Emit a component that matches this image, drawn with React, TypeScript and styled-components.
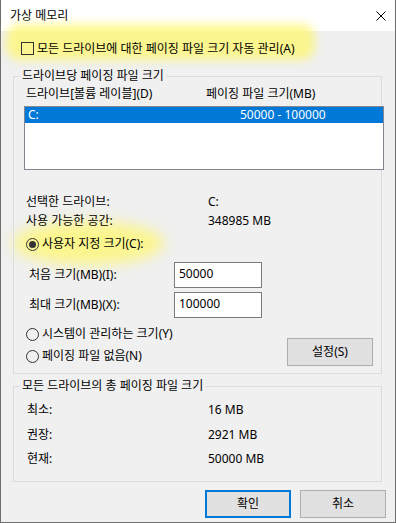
import React from 'react';
import styled, { createGlobalStyle } from 'styled-components';

const GlobalStyle = createGlobalStyle`
  html, body {
    margin: 0;
    padding: 0;
    background: #ffffff;
  }
  body {
    font-family: "Noto Sans", "Noto Sans CJK KR", sans-serif;
    font-size: 12px;
    line-height: 16px;
    color: #000000;
  }
  * {
    box-sizing: border-box;
  }
`;

const Window = styled.div`
  width: 396px;
  height: 523px;
  display: flex;
  flex-direction: column;
  border: 1px solid #6e6e6e;
  border-top: none;
  background: #f0f0f0;
`;

const TitleBar = styled.div`
  height: 31px;
  flex: none;
  display: flex;
  align-items: center;
  justify-content: space-between;
  padding: 0 9px 0 9px;
  background: #ffffff;
  .title {
    font-size: 12px;
  }
`;

// own stacking context so the highlighter marks sit under every text
const Body = styled.div`
  position: relative;
  isolation: isolate;
  flex: 1;
  display: flex;
  flex-direction: column;
  padding: 0 9px 0 12px;
`;

const Highlight = styled.div<{ $shape: 'stroke' | 'blob' }>`
  position: relative;
  align-self: flex-start;
  &::before {
    content: '';
    position: absolute;
    z-index: -1;
    pointer-events: none;
    background: rgba(255, 247, 110, 0.75);
    ${(p) =>
      p.$shape === 'stroke'
        ? `top: -7px; bottom: -5px; left: -7px; right: -20px; border-radius: 14px; filter: blur(5px);`
        : `top: -15px; bottom: -13px; left: -11px; right: -20px; border-radius: 50%; filter: blur(7px);`}
  }
`;

const AutoRow = styled.label`
  display: flex;
  align-items: center;
  gap: 3px;
  margin: 11px 0 0 8px;
  height: 13px;
`;

const CheckBox = styled.span`
  width: 13px;
  height: 13px;
  flex: none;
  border: 1px solid #333333;
`;

const Group = styled.fieldset`
  margin: 0 4px 0 0;
  padding: 0;
  min-width: 0;
  border: 1px solid #dcdcdc;
  legend {
    margin-left: 6px;
    padding: 0 2px;
    line-height: 16px;
  }
`;

const PerDriveGroup = styled(Group)`
  margin-top: 13px;
`;

const TotalGroup = styled(Group)`
  margin-top: 4px;
`;

const GroupBody = styled.div<{ $pad: string }>`
  display: flex;
  flex-direction: column;
  padding: ${(p) => p.$pad};
`;

const ColumnHeader = styled.div`
  display: grid;
  grid-template-columns: 180px auto;
  margin-top: 2px;
  padding-left: 2px;
  white-space: nowrap;
`;

const ListBox = styled.div`
  width: 360px;
  height: 64px;
  margin-top: 4px;
  padding: 0;
  background: #ffffff;
  border: 1px solid #828790;
`;

const ListRow = styled.div<{ $selected?: boolean }>`
  display: grid;
  grid-template-columns: 212px auto;
  height: 16px;
  padding-left: 3px;
  background: ${(p) => (p.$selected ? '#0078d7' : 'transparent')};
  color: ${(p) => (p.$selected ? '#ffffff' : '#000000')};
  white-space: nowrap;
`;

const InfoGrid = styled.div<{ $labelWidth: number; $gap: number }>`
  display: grid;
  grid-template-columns: ${(p) => p.$labelWidth}px auto;
  row-gap: ${(p) => p.$gap}px;
  white-space: nowrap;
`;

const RadioRow = styled.label`
  display: flex;
  align-items: center;
  gap: 3px;
  height: 16px;
  padding-left: 2px;
  white-space: nowrap;
`;

const Radio = styled.span<{ $checked?: boolean }>`
  width: 13px;
  height: 13px;
  flex: none;
  border-radius: 50%;
  border: 1px solid #333333;
  display: flex;
  align-items: center;
  justify-content: center;
  &::after {
    content: '';
    width: 7px;
    height: 7px;
    border-radius: 50%;
    background: ${(p) => (p.$checked ? '#333333' : 'transparent')};
  }
`;

const SizeRow = styled.div`
  display: grid;
  grid-template-columns: 145px 88px;
  align-items: center;
  height: 26px;
  padding-left: 5px;
  white-space: nowrap;
`;

const SizeInput = styled.div`
  height: 26px;
  padding: 3px 0 0 4px;
  background: #ffffff;
  border: 1px solid #7a7a7a;
`;

const BottomRow = styled.div`
  display: flex;
  justify-content: space-between;
  margin-top: 8px;
  padding-right: 8px;
`;

const RadioColumn = styled.div`
  display: flex;
  flex-direction: column;
  gap: 6px;
`;

const Button = styled.button<{ $default?: boolean }>`
  width: 86px;
  height: 28px;
  padding: 0;
  font: inherit;
  color: #000000;
  background: #e1e1e1;
  border: ${(p) => (p.$default ? '2px solid #0078d7' : '1px solid #adadad')};
`;

const SetButton = styled(Button)`
  margin-top: 12px;
`;

const Footer = styled.div`
  display: flex;
  justify-content: flex-end;
  gap: 9px;
  margin-top: 8px;
`;

const CloseIcon = () => (
  <svg width="10" height="10" viewBox="0 0 10 10">
    <path d="M0.5 0.5 L9.5 9.5 M9.5 0.5 L0.5 9.5" stroke="#000" strokeWidth="1" fill="none" />
  </svg>
);

const App = (): JSX.Element => {
  const totals = [
    { label: '최소:', value: '16 MB' },
    { label: '권장:', value: '2921 MB' },
    { label: '현재:', value: '50000 MB' },
  ];

  return (
    <Window>
      <GlobalStyle />
      <TitleBar>
        <span className="title">가상 메모리</span>
        <CloseIcon />
      </TitleBar>
      <Body>
        <Highlight $shape="stroke">
          <AutoRow>
            <CheckBox />
            <span>모든 드라이브에 대한 페이징 파일 크기 자동 관리(A)</span>
          </AutoRow>
        </Highlight>

        <PerDriveGroup>
          <legend>드라이브당 페이징 파일 크기</legend>
          <GroupBody $pad="0 0 7px 10px">
            <ColumnHeader>
              <span>드라이브[볼륨 레이블](D)</span>
              <span>페이징 파일 크기(MB)</span>
            </ColumnHeader>
            <ListBox>
              <ListRow $selected>
                <span>C:</span>
                <span>50000 - 100000</span>
              </ListRow>
            </ListBox>

            <InfoGrid $labelWidth={182} $gap={3} style={{ marginTop: 24, paddingLeft: 2 }}>
              <span>선택한 드라이브:</span>
              <span>C:</span>
              <span>사용 가능한 공간:</span>
              <span>348985 MB</span>
            </InfoGrid>

            <Highlight $shape="blob" style={{ marginTop: 7 }}>
              <RadioRow>
                <Radio $checked />
                <span>사용자 지정 크기(C):</span>
              </RadioRow>
            </Highlight>

            <SizeRow style={{ marginTop: 10 }}>
              <span>처음 크기(MB)(I):</span>
              <SizeInput>50000</SizeInput>
            </SizeRow>
            <SizeRow style={{ marginTop: 4 }}>
              <span>최대 크기(MB)(X):</span>
              <SizeInput>100000</SizeInput>
            </SizeRow>

            <BottomRow>
              <RadioColumn>
                <RadioRow>
                  <Radio />
                  <span>시스템이 관리하는 크기(Y)</span>
                </RadioRow>
                <RadioRow>
                  <Radio />
                  <span>페이징 파일 없음(N)</span>
                </RadioRow>
              </RadioColumn>
              <SetButton>설정(S)</SetButton>
            </BottomRow>
          </GroupBody>
        </PerDriveGroup>

        <TotalGroup>
          <legend>모든 드라이브의 총 페이징 파일 크기</legend>
          <GroupBody $pad="8px 0 14px 13px">
            <InfoGrid $labelWidth={181} $gap={8.5}>
              {totals.map((row) => (
                <React.Fragment key={row.label}>
                  <span>{row.label}</span>
                  <span>{row.value}</span>
                </React.Fragment>
              ))}
            </InfoGrid>
          </GroupBody>
        </TotalGroup>

        <Footer>
          <Button $default>확인</Button>
          <Button>취소</Button>
        </Footer>
      </Body>
    </Window>
  );
};

export default App;
